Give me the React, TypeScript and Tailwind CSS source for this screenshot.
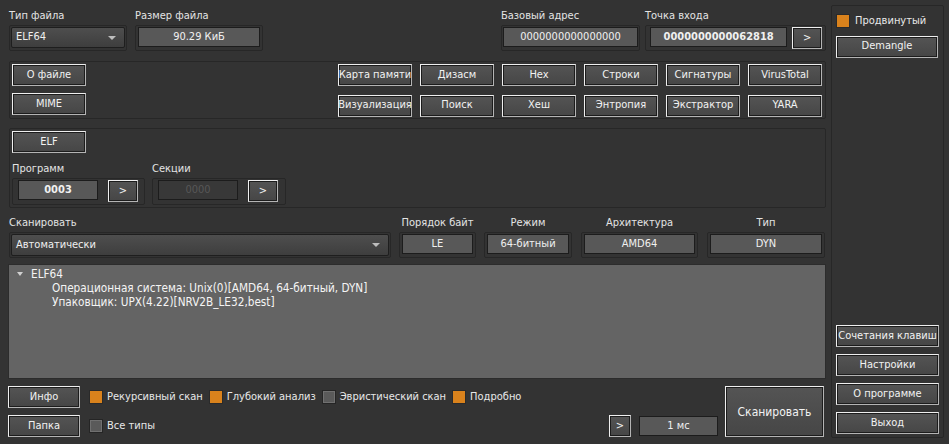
import React from "react";

const font = { fontFamily: '"DejaVu Sans Condensed", "DejaVu Sans", sans-serif' };

const Btn = ({ label, className = "" }: { label: string; className?: string }) => (
  <div
    className={`flex items-center justify-center h-[22px] border border-t-[#efefef] border-l-[#efefef] border-r-[#b4b4b4] border-b-[#b4b4b4] shadow-[inset_0_0_0_1px_#1c1c1c] bg-gradient-to-b from-[#545454] to-[#464646] text-[#f2f2f2] whitespace-nowrap ${className}`}
  >
    {label}
  </div>
);

const Field = ({ value, className = "", bold = false, dim = false }: { value: string; className?: string; bold?: boolean; dim?: boolean }) => (
  <div
    className={`flex items-center justify-center h-[20px] border border-[#1c1c1c] ${dim ? "bg-[#383838] text-[#575757]" : "bg-[#585858] text-[#f0f0f0]"} ${bold ? "font-bold" : ""} ${className}`}
  >
    {value}
  </div>
);

const Combo = ({ value, className = "" }: { value: string; className?: string }) => (
  <div className={`flex items-center justify-between h-[21px] pl-[4px] pr-[8px] rounded-[2px] border border-[#1e1e1e] bg-gradient-to-b from-[#4e4e4e] to-[#3e3e3e] text-[#f0f0f0] ${className}`}>
    <span>{value}</span>
    <span className="w-0 h-0 border-l-[4px] border-r-[4px] border-t-[4px] border-l-transparent border-r-transparent border-t-[#bdbdbd]" />
  </div>
);

const Check = ({ label, on }: { label: string; on: boolean }) => (
  <div className="flex items-center gap-[4px]">
    <span className={`w-[14px] h-[14px] border ${on ? "bg-[#d9821c] border-[#2a2a2a]" : "bg-[#5a5a5a] border-[#252525] shadow-[inset_0_0_0_1px_#707070]"}`} />
    <span className="text-[#e8e8e8]">{label}</span>
  </div>
);

const Frame = ({ children, className = "" }: { children: React.ReactNode; className?: string }) => (
  <div className={`border border-[#272727] rounded-[2px] ${className}`}>{children}</div>
);

export default function App() {
  const toolsTop = ["Карта памяти", "Дизасм", "Hex", "Строки", "Сигнатуры", "VirusTotal"];
  const toolsBottom = ["Визуализация", "Поиск", "Хеш", "Энтропия", "Экстрактор", "YARA"];

  return (
    <div style={font} className="flex w-[949px] h-[444px] bg-[#333333] text-[11px] text-[#e4e4e4] overflow-hidden">
      {/* main column */}
      <div className="w-[828px] flex flex-col pt-[9px] pl-[9px] pr-[2px]">
        {/* file info row */}
        <div className="flex">
          <div className="flex flex-col w-[118px]">
            <span className="h-[16px] leading-[14px]">Тип файла</span>
            <Frame className="h-[26px] p-[1px]">
              <Combo value="ELF64" />
            </Frame>
          </div>
          <div className="flex flex-col w-[128px] ml-[8px]">
            <span className="h-[16px] leading-[14px]">Размер файла</span>
            <Frame className="h-[26px] px-[2px] pt-[1px]">
              <Field value="90.29 КиБ" />
            </Frame>
          </div>
          <div className="flex flex-col w-[139px] ml-auto">
            <span className="h-[16px] leading-[14px]">Базовый адрес</span>
            <Frame className="h-[26px] px-[1px] pt-[1px]">
              <Field value="0000000000000000" />
            </Frame>
          </div>
          <div className="flex flex-col w-[181px] ml-[5px]">
            <span className="h-[16px] leading-[14px]">Точка входа</span>
            <Frame className="h-[26px] pl-[4px] pr-[3px] pt-[1px] flex gap-[5px]">
              <Field value="0000000000062818" bold className="w-[138px]" />
              <Btn label=">" className="w-[30px]" />
            </Frame>
          </div>
        </div>

        {/* tools */}
        <Frame className="mt-[10px] h-[58px] flex justify-between pl-[2px] pr-[3px] pt-[2px]">
          <div className="flex flex-col gap-[7px]">
            <Btn label="О файле" className="w-[74px]" />
            <Btn label="MIME" className="w-[74px]" />
          </div>
          <div className="grid grid-cols-6 gap-x-[8px] gap-y-[7px]">
            {toolsTop.concat(toolsBottom).map((t) => (
              <Btn key={t} label={t} className="w-[74px]" />
            ))}
          </div>
        </Frame>

        {/* ELF */}
        <Frame className="mt-[9px] h-[80px] pl-[2px] pt-[2px] flex flex-col">
          <Btn label="ELF" className="w-[74px]" />
          <div className="flex gap-[7px] mt-[9px]">
            <div className="flex flex-col">
              <span className="h-[16px] leading-[14px]">Программ</span>
              <Frame className="w-[133px] h-[27px] pl-[5px] pt-[1px] flex gap-[10px]">
                <Field value="0003" bold className="w-[80px]" />
                <Btn label=">" className="w-[30px]" />
              </Frame>
            </div>
            <div className="flex flex-col">
              <span className="h-[16px] leading-[14px]">Секции</span>
              <Frame className="w-[134px] h-[27px] pl-[5px] pt-[1px] flex gap-[10px]">
                <Field value="0000" dim className="w-[80px]" />
                <Btn label=">" className="w-[30px]" />
              </Frame>
            </div>
          </div>
        </Frame>

        {/* scan options */}
        <div className="flex mt-[8px]">
          <div className="flex flex-col w-[382px]">
            <span className="h-[16px] leading-[14px]">Сканировать</span>
            <Frame className="h-[26px] p-[1px]">
              <Combo value="Автоматически" className="h-[22px]" />
            </Frame>
          </div>
          {[
            { l: "Порядок байт", v: "LE", w: "w-[77px]", ml: "ml-[8px]" },
            { l: "Режим", v: "64-битный", w: "w-[88px]", ml: "ml-[8px]" },
            { l: "Архитектура", v: "AMD64", w: "w-[117px]", ml: "ml-[9px]" },
            { l: "Тип", v: "DYN", w: "w-[118px]", ml: "ml-[9px]" },
          ].map((x) => (
            <div key={x.l} className={`flex flex-col ${x.w} ${x.ml}`}>
              <span className="h-[16px] leading-[14px] text-center whitespace-nowrap">{x.l}</span>
              <Frame className="h-[26px] px-[2px] pt-[1px]">
                <Field value={x.v} className="h-[19px]" />
              </Frame>
            </div>
          ))}
        </div>

        {/* result tree */}
        <div className="mt-[6px] -ml-[1px] h-[115px] bg-[#646464] border border-[#2c2c2c] pt-[2px] text-[#f4f4f4] text-[11.7px] leading-[14px]">
          <div className="flex items-center">
            <span className="ml-[8px] w-0 h-0 border-l-[3.5px] border-r-[3.5px] border-t-[4px] border-l-transparent border-r-transparent border-t-[#d0d0d0]" />
            <span className="ml-[8px]">ELF64</span>
          </div>
          <div className="pl-[43px]">Операционная система: Unix(0)[AMD64, 64-битный, DYN]</div>
          <div className="pl-[43px]">Упаковщик: UPX(4.22)[NRV2B_LE32,best]</div>
        </div>

        {/* bottom */}
        <div className="flex mt-[7px] -ml-[1px]">
          <div className="flex flex-col gap-[7px]">
            <div className="flex items-center gap-[9px]">
              <Btn label="Инфо" className="w-[72px]" />
              <div className="flex gap-[6px]">
                <Check label="Рекурсивный скан" on />
                <Check label="Глубокий анализ" on />
                <Check label="Эвристический скан" on={false} />
                <Check label="Подробно" on />
              </div>
            </div>
            <div className="flex items-center gap-[9px]">
              <Btn label="Папка" className="w-[72px]" />
              <Check label="Все типы" on={false} />
            </div>
          </div>
          <div className="ml-auto flex items-end gap-[8px]">
            <Btn label=">" className="w-[22px]" />
            <Field value="1 мс" className="w-[79px] mb-[1px]" />
            <Btn label="Сканировать" className="w-[99px] h-[51px] text-[12px] ml-[-1px]" />
          </div>
          <div className="w-[2px]" />
        </div>
      </div>

      {/* right panel */}
      <div className="ml-[3px] mt-[5px] mb-[6px] w-[113px] border border-[#272727] rounded-[2px] flex flex-col px-[4px] pt-[7px] pb-[3px]">
        <div className="flex items-center gap-[5px]">
          <span className="w-[14px] h-[14px] bg-[#d9821c] border border-[#2a2a2a]" />
          <span className="text-[#e8e8e8]">Продвинутый</span>
        </div>
        <Btn label="Demangle" className="mt-[6px] w-[102px]" />
        <div className="mt-auto flex flex-col gap-[7px]">
          <Btn label="Сочетания клавиш" className="w-[103px]" />
          <Btn label="Настройки" className="w-[103px]" />
          <Btn label="О программе" className="w-[103px]" />
          <Btn label="Выход" className="w-[103px]" />
        </div>
      </div>
    </div>
  );
}
